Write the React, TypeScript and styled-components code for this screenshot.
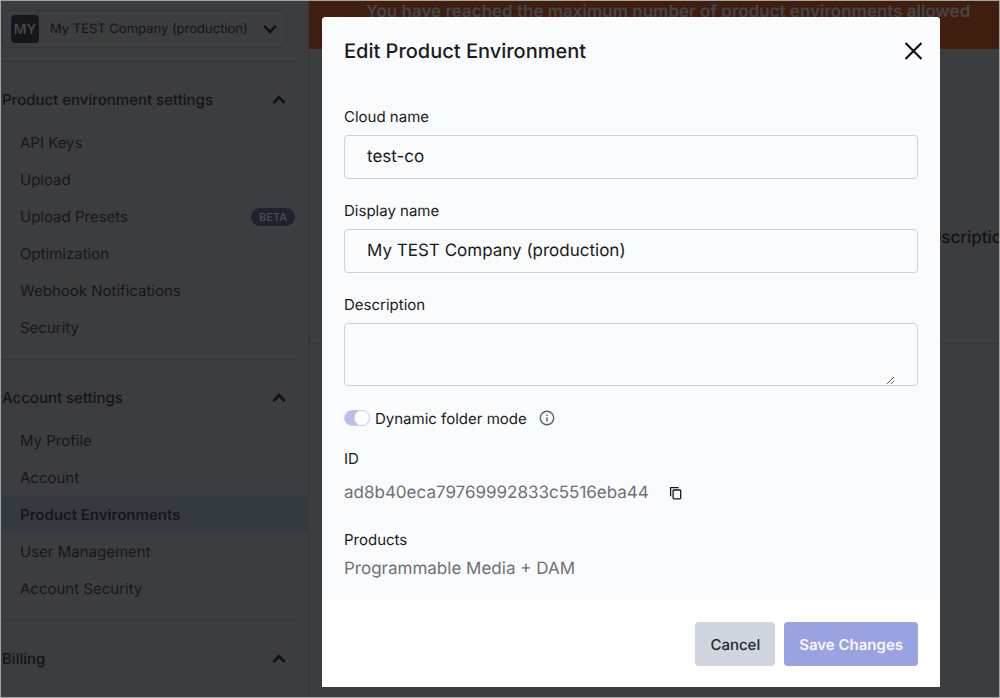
import React from "react";
import styled, { createGlobalStyle } from "styled-components";

const GlobalStyle = createGlobalStyle`
  *, *::before, *::after { box-sizing: border-box; }
  body {
    margin: 0;
    background: #3c3d3f;
    font-family: Inter, "Liberation Sans", sans-serif;
    text-rendering: geometricPrecision;
    color: #191b20;
  }
  button, input, textarea {
    font-family: inherit;
    text-rendering: inherit;
    color: inherit;
  }
`;

const Page = styled.div`
  position: relative;
  display: grid;
  grid-template-columns: 308px minmax(0, 1fr);
  min-height: 100vh;
  border: 1px solid #a2a5a6;
  background: #3c3d3f;
  overflow: hidden;
`;

const Sidebar = styled.nav`
  border-right: 1px solid #323335;
  color: #12141a;
  padding-top: 9px;
`;

const EnvironmentPicker = styled.button`
  display: flex;
  align-items: center;
  width: 285px;
  height: 38px;
  padding: 0 8px;
  margin-left: 1px;
  border: 1px solid #343638;
  border-radius: 4px;
  background: transparent;
  font-size: 13px;
`;

const Initials = styled.span`
  display: grid;
  place-items: center;
  width: 28px;
  height: 28px;
  margin-right: 11px;
  border-radius: 4px;
  background: #15171c;
  color: #4a4b4e;
  font-size: 14px;
  font-weight: 500;
`;

const PickerName = styled.span`
  flex: 1;
  text-align: left;
  white-space: nowrap;
`;

const Section = styled.section`
  padding-bottom: 13px;
`;

const Divider = styled.hr`
  height: 1px;
  margin: 0 13px 14px 1px;
  border: 0;
  background: #333539;
`;

const PickerArea = styled.div`
  padding-bottom: 13px;
`;

const SectionHeading = styled.button`
  display: flex;
  align-items: center;
  justify-content: space-between;
  width: 100%;
  height: 47px;
  padding: 0 21px 0 1px;
  border: 0;
  background: transparent;
  font-size: 15px;
  font-weight: 500;
`;

const NavList = styled.ul`
  list-style: none;
  margin: 0;
  padding: 1px 0 0;
`;

const NavLink = styled.a<{ $active?: boolean }>`
  display: flex;
  align-items: center;
  justify-content: space-between;
  height: 37px;
  padding: 0 13px 0 19px;
  background: ${(p) => (p.$active ? "#353a40" : "transparent")};
  color: #15171d;
  font-size: 15px;
  font-weight: ${(p) => (p.$active ? 600 : 400)};
  text-decoration: none;
`;

const BetaTag = styled.span`
  padding: 0 8px;
  border-radius: 9px;
  background: #20222f;
  color: #4d4f58;
  font-size: 11px;
  line-height: 18px;
  font-weight: 500;
`;

const Main = styled.main`
  overflow: hidden;
`;

const Banner = styled.div`
  display: flex;
  align-items: center;
  gap: 14px;
  height: 48px;
  padding: 0 11px 0 23px;
  background: #401e0f;
  color: #454647;
`;

const BannerText = styled.p`
  flex: 1;
  align-self: flex-start;
  margin: 0;
  font-size: 17px;
  line-height: 22px;
  font-weight: 600;
  white-space: nowrap;
`;

const EnvironmentTable = styled.table`
  width: 100%;
  margin-top: 85px;
  border-collapse: collapse;
  table-layout: fixed;
`;

const HeaderCell = styled.th`
  height: 209px;
  padding: 0;
  border-bottom: 1px solid #343537;
  color: #101218;
  font-size: 17px;
  font-weight: 500;
  text-align: left;
  white-space: nowrap;
  overflow: hidden;

  &:last-child { width: 80px; }
`;

const Overlay = styled.div`
  position: absolute;
  inset: 0;
  display: flex;
  align-items: flex-start;
  padding: 16px 59px 10px 321px;
`;

const Dialog = styled.form`
  flex: 1;
  min-width: 0;
  border-radius: 4px 4px 0 0;
  background: #fff;
  overflow: hidden;
`;

const DialogBody = styled.div`
  padding: 20px 22px 17px;
  background: #fafbfd;
`;

const DialogHeader = styled.header`
  display: flex;
  align-items: center;
  justify-content: space-between;
  height: 28px;
  margin-bottom: 40px;
`;

const Title = styled.h1`
  margin: 0;
  font-size: 20px;
  line-height: 28px;
  font-weight: 500;
`;

const IconButton = styled.button`
  display: grid;
  place-items: center;
  padding: 0;
  border: 0;
  background: transparent;
`;

const Field = styled.div`
  margin-bottom: 20px;
`;

const Label = styled.label`
  display: block;
  margin-bottom: 6px;
  font-size: 15px;
  line-height: 24px;
`;

const TextInput = styled.input`
  display: block;
  width: 100%;
  height: 44px;
  padding: 0 22px;
  border: 1px solid #cdd0dc;
  border-radius: 4px;
  background: transparent;
  font-size: 17px;
  outline: none;
`;

const TextAreaBox = styled.div`
  padding: 0 22px;
  border: 1px solid #cdd0dc;
  border-radius: 4px;
`;

const TextArea = styled.textarea`
  display: block;
  width: 100%;
  height: 61px;
  padding: 8px 0;
  border: 0;
  background: transparent;
  font-size: 17px;
  resize: vertical;
  outline: none;
`;

const ToggleRow = styled.div`
  display: flex;
  align-items: center;
  height: 24px;
  margin-bottom: 17px;
  font-size: 15px;
`;

const Toggle = styled.input`
  appearance: none;
  width: 26px;
  height: 16px;
  margin: 0 5px 0 0;
  border: 1px solid #c9cdea;
  border-radius: 8px;
  background: radial-gradient(circle at 17px 7px, #fff 7px, #b9bfea 8px);
`;

const InfoButton = styled(IconButton)`
  margin-left: 12px;
  color: #5f6268;
`;

const Details = styled.dl`
  margin: 0;
`;

const Term = styled.dt`
  font-size: 15px;
  line-height: 24px;
`;

const Value = styled.dd<{ $spaced?: boolean }>`
  display: flex;
  align-items: center;
  gap: 20px;
  margin: ${(p) => (p.$spaced ? "8px 0 21px" : "3px 0 0")};
  color: #6d7076;
  font-size: 17px;
  line-height: 28px;
`;

const DialogFooter = styled.footer`
  display: flex;
  justify-content: flex-end;
  gap: 9px;
  padding: 22px 22px 21px;
`;

const Button = styled.button<{ $primary?: boolean }>`
  height: 44px;
  padding: 0 15px;
  border: 0;
  border-radius: 4px;
  background: ${(p) => (p.$primary ? "#9ba2e1" : "#d1d5e0")};
  color: ${(p) => (p.$primary ? "#f8f9fe" : "#24262b")};
  font-size: 15px;
  font-weight: ${(p) => (p.$primary ? 600 : 500)};
`;

const Chevron = ({ up }: { up?: boolean }) => (
  <svg width="16" height="16" viewBox="0 0 16 16" fill="none" stroke="#0f1116" strokeWidth="2.6" aria-hidden="true">
    <path d={up ? "M2.5 11 8 5.2 13.5 11" : "M2.2 5 8 11 13.8 5"} />
  </svg>
);

type Item = { name: string; beta?: boolean; active?: boolean };

const sections: { title: string; items: Item[] }[] = [
  {
    title: "Product environment settings",
    items: [
      { name: "API Keys" },
      { name: "Upload" },
      { name: "Upload Presets", beta: true },
      { name: "Optimization" },
      { name: "Webhook Notifications" },
      { name: "Security" },
    ],
  },
  {
    title: "Account settings",
    items: [
      { name: "My Profile" },
      { name: "Account" },
      { name: "Product Environments", active: true },
      { name: "User Management" },
      { name: "Account Security" },
    ],
  },
  { title: "Billing", items: [] },
];

export default function App() {
  return (
    <>
      <GlobalStyle />
      <Page>
        <Sidebar>
          <PickerArea>
            <EnvironmentPicker type="button">
              <Initials>MY</Initials>
              <PickerName>My TEST Company (production)</PickerName>
              <Chevron />
            </EnvironmentPicker>
          </PickerArea>
          {sections.map((section) => (
            <Section key={section.title}>
              <Divider />
              <SectionHeading type="button">
                {section.title}
                <Chevron up />
              </SectionHeading>
              <NavList>
                {section.items.map((item) => (
                  <li key={item.name}>
                    <NavLink href="#" $active={item.active}>
                      {item.name}
                      {item.beta && <BetaTag>BETA</BetaTag>}
                    </NavLink>
                  </li>
                ))}
              </NavList>
            </Section>
          ))}
        </Sidebar>
        <Main>
          <Banner>
            <svg width="20" height="20" viewBox="0 0 20 20" fill="currentColor" aria-hidden="true">
              <path d="M10 1 20 19H0Z" />
            </svg>
            <BannerText>You have reached the maximum number of product environments allowed</BannerText>
          </Banner>
          <EnvironmentTable>
            <thead>
              <tr>
                <HeaderCell />
                <HeaderCell>Description</HeaderCell>
              </tr>
            </thead>
          </EnvironmentTable>
        </Main>
        <Overlay>
          <Dialog role="dialog" aria-labelledby="dialog-title" onSubmit={(e) => e.preventDefault()}>
            <DialogBody>
              <DialogHeader>
                <Title id="dialog-title">Edit Product Environment</Title>
                <IconButton type="button" aria-label="Close">
                  <svg width="10" height="18" viewBox="4 0 10 18" overflow="visible" fill="none" stroke="#111216" strokeWidth="2.2">
                    <path d="M1.5 1 17.5 17M17.5 1 1.5 17" />
                  </svg>
                </IconButton>
              </DialogHeader>
              <Field>
                <Label htmlFor="cloud-name">Cloud name</Label>
                <TextInput id="cloud-name" defaultValue="test-co" />
              </Field>
              <Field>
                <Label htmlFor="display-name">Display name</Label>
                <TextInput id="display-name" defaultValue="My TEST Company (production)" />
              </Field>
              <Field>
                <Label htmlFor="description">Description</Label>
                <TextAreaBox>
                  <TextArea id="description" />
                </TextAreaBox>
              </Field>
              <ToggleRow>
                <Toggle type="checkbox" role="switch" id="folder-mode" defaultChecked />
                <label htmlFor="folder-mode">Dynamic folder mode</label>
                <InfoButton type="button" aria-label="About dynamic folder mode">
                  <svg width="16" height="16" viewBox="0 0 16 16" fill="none" stroke="currentColor" strokeWidth="1.4">
                    <circle cx="8" cy="8" r="6.7" />
                    <path d="M8 7.2V11.6M8 4.4V5.9" />
                  </svg>
                </InfoButton>
              </ToggleRow>
              <Details>
                <Term>ID</Term>
                <Value $spaced>
                  ad8b40eca79769992833c5516eba44
                  <IconButton type="button" aria-label="Copy ID">
                    <svg width="14" height="14" viewBox="0 0 14 14" fill="none" stroke="#17191d" strokeWidth="1.3">
                      <path d="M1.6 10.2V1.6H9.6" />
                      <rect x="4.1" y="4" width="7.6" height="8.8" rx="0.8" />
                    </svg>
                  </IconButton>
                </Value>
                <Term>Products</Term>
                <Value>Programmable Media + DAM</Value>
              </Details>
            </DialogBody>
            <DialogFooter>
              <Button type="button">Cancel</Button>
              <Button type="submit" $primary>Save Changes</Button>
            </DialogFooter>
          </Dialog>
        </Overlay>
      </Page>
    </>
  );
}
